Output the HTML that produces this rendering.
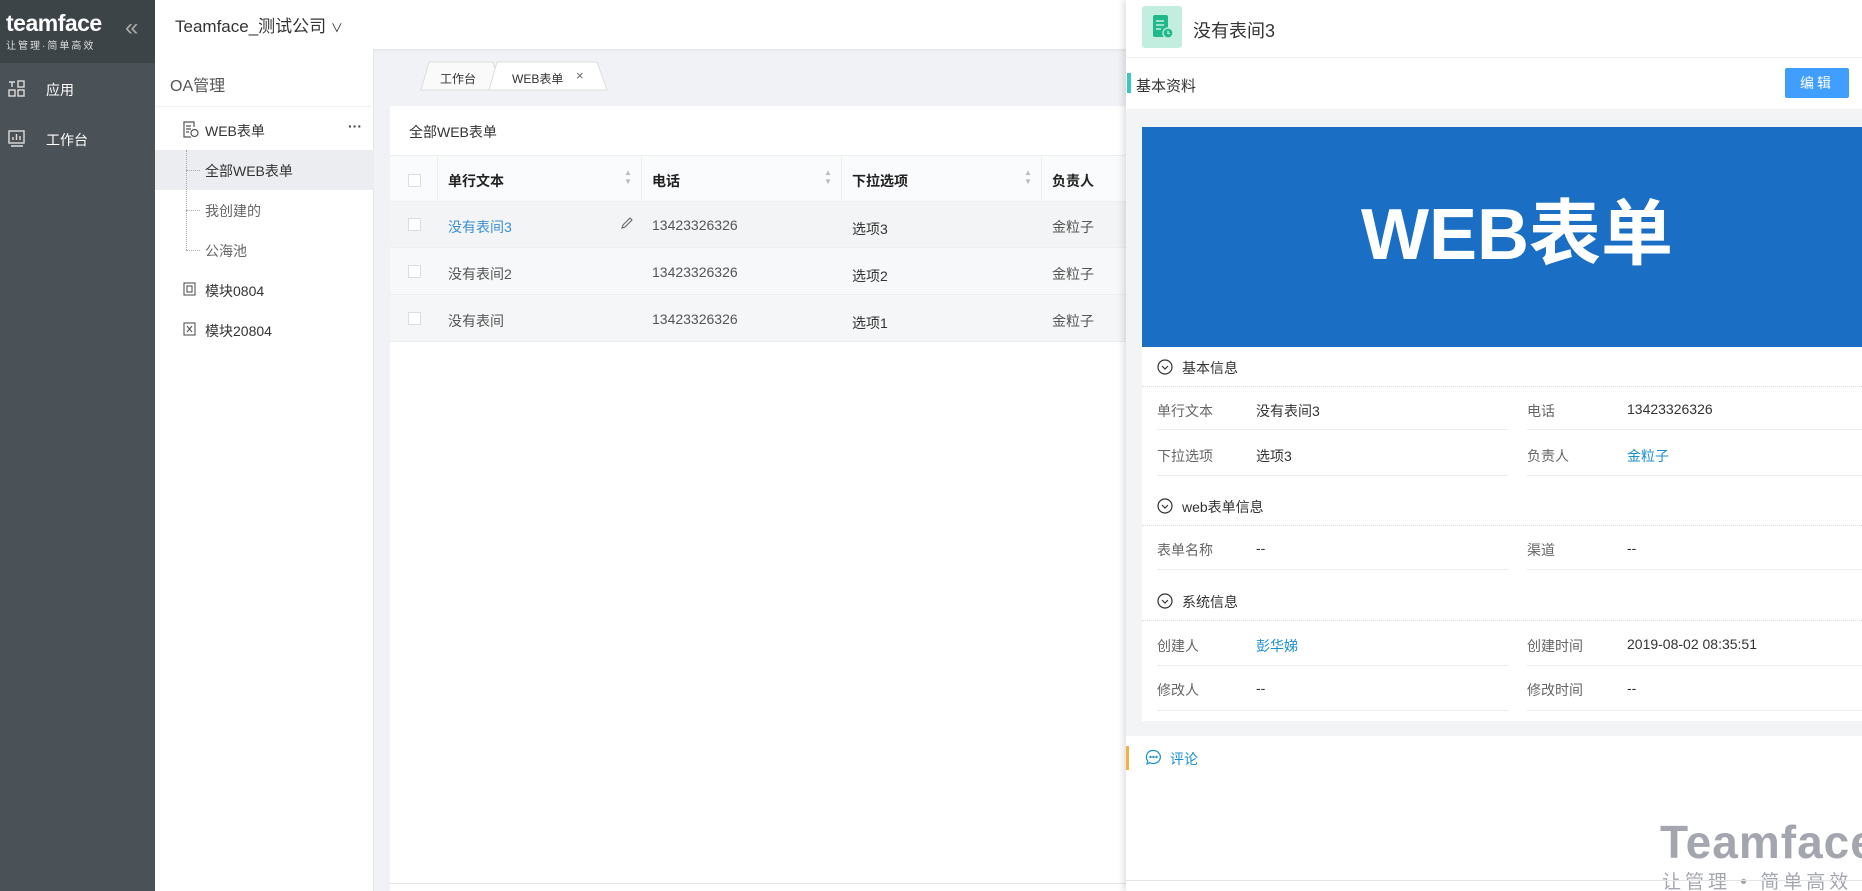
<!DOCTYPE html>
<html style="width:1862px;height:891px;overflow:hidden"><head><meta charset="utf-8"><style>
*{margin:0;padding:0;box-sizing:border-box}
body{width:1862px;height:891px;overflow:hidden;position:relative;font-family:"Liberation Sans","Noto Sans CJK SC",sans-serif;background:#f0f2f5;color:#333;font-size:14px}
#wrap{position:absolute;left:0;top:0;width:1862px;height:891px;overflow:hidden}
.abs{position:absolute;white-space:nowrap}
.side{left:0;top:0;width:155px;height:891px;background:#4a5157}
.logo{left:0;top:0;width:155px;height:63px;background:#3d4448}
.top{left:155px;top:0;width:1707px;height:49px;background:#fff;box-shadow:0 1px 3px rgba(0,0,0,.08)}
.tree{left:155px;top:49px;width:219px;height:842px;background:#fff;border-right:1px solid #e6e6e6}
.card{left:390px;top:106px;width:740px;height:785px;background:#fff}
.th{font-weight:bold;color:#222;font-size:14px}
.cb{width:13px;height:13px;border:1px solid #ddd;background:#fff}
.panel{left:1126px;top:0;width:736px;height:891px;background:#fff;box-shadow:-3px 0 6px rgba(0,0,0,.12)}
.lbl{color:#666;font-size:14px}
.val{color:#333;font-size:14px}
.link{color:#1a8fd0}
.ln{height:1px;background:#ececec}
.dl{height:0;border-top:1px dotted #ddd}
</style></head><body><div id="wrap">
<div class="abs side"></div>
<div class="abs logo"></div>
<div class="abs" style="left:6px;top:10px;color:#fff;font-size:23px;font-weight:bold;letter-spacing:-0.5px">teamface</div>
<div class="abs" style="left:6px;top:37px;color:#ddd;font-size:10px;letter-spacing:2px">让管理·简单高效</div>
<div class="abs" style="left:125px;top:14px;color:#aaa;font-size:24px">«</div>
<svg class="abs" style="left:8px;top:80px" width="18" height="18" viewBox="0 0 18 18" fill="none" stroke="#ddd" stroke-width="1.4"><path d="M1 2h6M4 2v5"/><rect x="10" y="1" width="6" height="6"/><rect x="1" y="10" width="6" height="6"/><rect x="10" y="10" width="6" height="6"/></svg>
<div class="abs" style="left:46px;top:80px;color:#fff;font-size:14px">应用</div>
<svg class="abs" style="left:8px;top:130px" width="18" height="18" viewBox="0 0 18 18" fill="none" stroke="#ddd" stroke-width="1.4"><rect x="1" y="1" width="15" height="12"/><path d="M5 10V7M8.5 10V4M12 10V6M3 16h12"/></svg>
<div class="abs" style="left:46px;top:130px;color:#fff;font-size:14px">工作台</div>

<div class="abs top"></div>
<div class="abs" style="left:175px;top:12px;font-size:17px;color:#333">Teamface_测试公司 <span style="font-size:12px">∨</span></div>

<div class="abs tree"></div>
<div class="abs" style="left:170px;top:72px;font-size:16px;color:#555">OA管理</div>
<div class="abs" style="left:155px;top:106px;width:219px;height:1px;background:#f2f2f2"></div>
<svg class="abs" style="left:183px;top:121px" width="16" height="17" viewBox="0 0 16 17" fill="none" stroke="#555" stroke-width="1.2"><path d="M11 6V1H1v15h7"/><path d="M3 5h5M3 8h5M3 11h3"/><circle cx="11.5" cy="12" r="3.5"/></svg>
<div class="abs" style="left:205px;top:121px;font-size:14px;color:#333">WEB表单</div>
<div class="abs" style="left:348px;top:118px;font-size:14px;color:#444;font-weight:bold">···</div>
<div class="abs" style="left:155px;top:150px;width:219px;height:40px;background:#ebedf0"></div>
<div class="abs" style="left:186px;top:150px;height:100px;border-left:1px dotted #aaa"></div>
<div class="abs" style="left:186px;top:170px;width:14px;border-top:1px dotted #aaa"></div>
<div class="abs" style="left:186px;top:210px;width:14px;border-top:1px dotted #aaa"></div>
<div class="abs" style="left:186px;top:250px;width:14px;border-top:1px dotted #aaa"></div>
<div class="abs" style="left:205px;top:161px;color:#333">全部WEB表单</div>
<div class="abs" style="left:205px;top:201px;color:#666">我创建的</div>
<div class="abs" style="left:205px;top:241px;color:#666">公海池</div>
<svg class="abs" style="left:183px;top:282px" width="13" height="14" viewBox="0 0 13 14" fill="none" stroke="#555" stroke-width="1.1"><rect x="1" y="1" width="11" height="12"/><rect x="4" y="4" width="5" height="6"/></svg>
<div class="abs" style="left:205px;top:281px;color:#333">模块0804</div>
<svg class="abs" style="left:183px;top:322px" width="13" height="14" viewBox="0 0 13 14" fill="none" stroke="#555" stroke-width="1.1"><rect x="1" y="1" width="11" height="12"/><path d="M4 4l5 6M9 4l-5 6"/></svg>
<div class="abs" style="left:205px;top:321px;color:#333">模块20804</div>

<svg class="abs" style="left:415px;top:59px" width="200" height="32"><path d="M6 31L14 3H78L86 31Z" fill="#fafafa" stroke="#ddd"/><path d="M74 31L82 3H182L192 31Z" fill="#fff" stroke="#ddd"/></svg>
<div class="abs" style="left:440px;top:70px;font-size:12px;color:#333">工作台</div>
<div class="abs" style="left:512px;top:70px;font-size:12px;color:#333">WEB表单</div>
<div class="abs" style="left:576px;top:68px;font-size:13px;color:#666">×</div>

<div class="abs card"></div>
<div class="abs" style="left:409px;top:122px;color:#333">全部WEB表单</div>
<div class="abs" style="left:390px;top:155px;width:740px;height:47px;background:#fafbfc;border-top:1px solid #eee;border-bottom:1px solid #eee"></div>
<div class="abs" style="left:437px;top:155px;width:1px;height:47px;background:#eee"></div>
<div class="abs" style="left:641px;top:155px;width:1px;height:47px;background:#eee"></div>
<div class="abs" style="left:841px;top:155px;width:1px;height:47px;background:#eee"></div>
<div class="abs" style="left:1041px;top:155px;width:1px;height:47px;background:#eee"></div>
<div class="abs cb" style="left:408px;top:174px"></div>
<div class="abs th" style="left:448px;top:171px">单行文本</div>
<div class="abs th" style="left:652px;top:171px">电话</div>
<div class="abs th" style="left:852px;top:171px">下拉选项</div>
<div class="abs th" style="left:1052px;top:171px">负责人</div>
<div class="abs" style="left:624px;top:168px;color:#bbb;font-size:8px;line-height:9px">▲<br>▼</div>
<div class="abs" style="left:824px;top:168px;color:#bbb;font-size:8px;line-height:9px">▲<br>▼</div>
<div class="abs" style="left:1024px;top:168px;color:#bbb;font-size:8px;line-height:9px">▲<br>▼</div>
<div class="abs" style="left:390px;top:202px;width:740px;height:46px;background:#f3f4f5;border-bottom:1px solid #eee"></div>
<div class="abs" style="left:390px;top:248px;width:740px;height:47px;background:#f7f8f9;border-bottom:1px solid #eee"></div>
<div class="abs" style="left:390px;top:295px;width:740px;height:47px;background:#f5f6f7;border-bottom:1px solid #eee"></div>
<div class="abs cb" style="left:408px;top:218px"></div>
<div class="abs cb" style="left:408px;top:265px"></div>
<div class="abs cb" style="left:408px;top:312px"></div>
<div class="abs link" style="left:448px;top:217px;color:#3b8fd6">没有表间3</div>
<svg class="abs" style="left:620px;top:216px" width="14" height="14" viewBox="0 0 14 14" fill="none" stroke="#666" stroke-width="1.1"><path d="M2 12l1-3 7-7 2 2-7 7z"/></svg>
<div class="abs val" style="left:652px;top:217px;color:#555">13423326326</div>
<div class="abs val" style="left:852px;top:219px">选项3</div>
<div class="abs val" style="left:1052px;top:217px;color:#555">金粒子</div>
<div class="abs val" style="left:448px;top:264px;color:#555">没有表间2</div>
<div class="abs val" style="left:652px;top:264px;color:#555">13423326326</div>
<div class="abs val" style="left:852px;top:266px">选项2</div>
<div class="abs val" style="left:1052px;top:264px;color:#555">金粒子</div>
<div class="abs val" style="left:448px;top:311px;color:#555">没有表间</div>
<div class="abs val" style="left:652px;top:311px;color:#555">13423326326</div>
<div class="abs val" style="left:852px;top:313px">选项1</div>
<div class="abs val" style="left:1052px;top:311px;color:#555">金粒子</div>
<div class="abs" style="left:390px;top:883px;width:740px;height:1px;background:#e5e5e5"></div>

<div class="abs panel"></div>
<div class="abs" style="left:1142px;top:6px;width:40px;height:42px;background:#c2eee0;border-radius:3px"></div>
<svg class="abs" style="left:1152px;top:14px" width="22" height="26" viewBox="0 0 22 26"><rect x="1" y="1" width="15" height="22" rx="2" fill="#21b98a"/><path d="M4 7h8M4 11h8M4 15h5" stroke="#c2eee0" stroke-width="1.5"/><circle cx="16" cy="19" r="5" fill="#21b98a" stroke="#c2eee0" stroke-width="1.3"/><path d="M16 16.5v3h2" stroke="#c2eee0" stroke-width="1.2" fill="none"/></svg>
<div class="abs" style="left:1193px;top:17px;font-size:18px;color:#333">没有表间3</div>
<div class="abs" style="left:1126px;top:57px;width:736px;height:1px;background:#eee"></div>
<div class="abs" style="left:1127px;top:73px;width:4px;height:20px;background:#3cc8c0"></div>
<div class="abs" style="left:1136px;top:75px;font-size:15px;color:#333">基本资料</div>
<div class="abs" style="left:1785px;top:68px;width:64px;height:30px;background:#409eff;border-radius:2px;color:#fff;font-size:14px;text-align:center;line-height:30px;letter-spacing:3px">编辑</div>
<div class="abs" style="left:1126px;top:109px;width:736px;height:627px;background:#f3f4f5"></div>
<div class="abs" style="left:1142px;top:127px;width:720px;height:594px;background:#fff"></div>
<div class="abs" style="left:1142px;top:127px;width:720px;height:220px;background:#1a6fc4"></div>
<div class="abs" style="left:1142px;top:188px;width:750px;text-align:center;color:#fff;font-size:72px;font-weight:bold;line-height:95px">WEB表单</div>

<svg class="abs" style="left:1157px;top:359px" width="16" height="16"><circle cx="8" cy="8" r="7" fill="none" stroke="#333" stroke-width="1.2"/><path d="M5 7l3 3 3-3" fill="none" stroke="#333" stroke-width="1.2"/></svg>
<div class="abs" style="left:1182px;top:358px;color:#333;font-size:14px">基本信息</div>
<div class="abs dl" style="left:1142px;top:386px;width:720px"></div>
<div class="abs lbl" style="left:1157px;top:401px">单行文本</div><div class="abs val" style="left:1256px;top:401px">没有表间3</div>
<div class="abs lbl" style="left:1527px;top:401px">电话</div><div class="abs val" style="left:1627px;top:401px">13423326326</div>
<div class="abs ln" style="left:1157px;top:429px;width:351px"></div><div class="abs ln" style="left:1527px;top:429px;width:335px"></div>
<div class="abs lbl" style="left:1157px;top:446px">下拉选项</div><div class="abs val" style="left:1256px;top:446px">选项3</div>
<div class="abs lbl" style="left:1527px;top:446px">负责人</div><div class="abs val link" style="left:1627px;top:446px">金粒子</div>
<div class="abs ln" style="left:1157px;top:475px;width:351px"></div><div class="abs ln" style="left:1527px;top:475px;width:335px"></div>

<svg class="abs" style="left:1157px;top:498px" width="16" height="16"><circle cx="8" cy="8" r="7" fill="none" stroke="#333" stroke-width="1.2"/><path d="M5 7l3 3 3-3" fill="none" stroke="#333" stroke-width="1.2"/></svg>
<div class="abs" style="left:1182px;top:497px;color:#333;font-size:14px">web表单信息</div>
<div class="abs dl" style="left:1142px;top:525px;width:720px"></div>
<div class="abs lbl" style="left:1157px;top:540px">表单名称</div><div class="abs val" style="left:1256px;top:540px">--</div>
<div class="abs lbl" style="left:1527px;top:540px">渠道</div><div class="abs val" style="left:1627px;top:540px">--</div>
<div class="abs ln" style="left:1157px;top:569px;width:351px"></div><div class="abs ln" style="left:1527px;top:569px;width:335px"></div>

<svg class="abs" style="left:1157px;top:593px" width="16" height="16"><circle cx="8" cy="8" r="7" fill="none" stroke="#333" stroke-width="1.2"/><path d="M5 7l3 3 3-3" fill="none" stroke="#333" stroke-width="1.2"/></svg>
<div class="abs" style="left:1182px;top:592px;color:#333;font-size:14px">系统信息</div>
<div class="abs dl" style="left:1142px;top:620px;width:720px"></div>
<div class="abs lbl" style="left:1157px;top:636px">创建人</div><div class="abs val link" style="left:1256px;top:636px">彭华娣</div>
<div class="abs lbl" style="left:1527px;top:636px">创建时间</div><div class="abs val" style="left:1627px;top:636px">2019-08-02 08:35:51</div>
<div class="abs ln" style="left:1157px;top:665px;width:351px"></div><div class="abs ln" style="left:1527px;top:665px;width:335px"></div>
<div class="abs lbl" style="left:1157px;top:680px">修改人</div><div class="abs val" style="left:1256px;top:680px">--</div>
<div class="abs lbl" style="left:1527px;top:680px">修改时间</div><div class="abs val" style="left:1627px;top:680px">--</div>
<div class="abs ln" style="left:1157px;top:710px;width:351px"></div><div class="abs ln" style="left:1527px;top:710px;width:335px"></div>

<div class="abs" style="left:1126px;top:746px;width:3px;height:24px;background:#f5b042"></div>
<svg class="abs" style="left:1145px;top:749px" width="17" height="17" viewBox="0 0 17 17" fill="none" stroke="#1a8fd0" stroke-width="1.2"><path d="M8.5 1.5a7 6.5 0 1 1-3.5 12.2L2 15l.8-3A6.5 6.5 0 0 1 8.5 1.5z"/><circle cx="5.5" cy="8" r=".6" fill="#1a8fd0"/><circle cx="8.5" cy="8" r=".6" fill="#1a8fd0"/><circle cx="11.5" cy="8" r=".6" fill="#1a8fd0"/></svg>
<div class="abs link" style="left:1170px;top:749px;font-size:14px">评论</div>

<div class="abs" style="left:1660px;top:815px;font-size:46px;font-weight:bold;color:#a3a6ae;letter-spacing:1px">Teamface</div>
<div class="abs" style="left:1662px;top:867px;font-size:19px;color:#a3a6ae;letter-spacing:4px">让管理 • 简单高效</div>
<div class="abs" style="left:1126px;top:880px;width:736px;height:1px;background:#e3e3e3"></div>
</div></body></html>
